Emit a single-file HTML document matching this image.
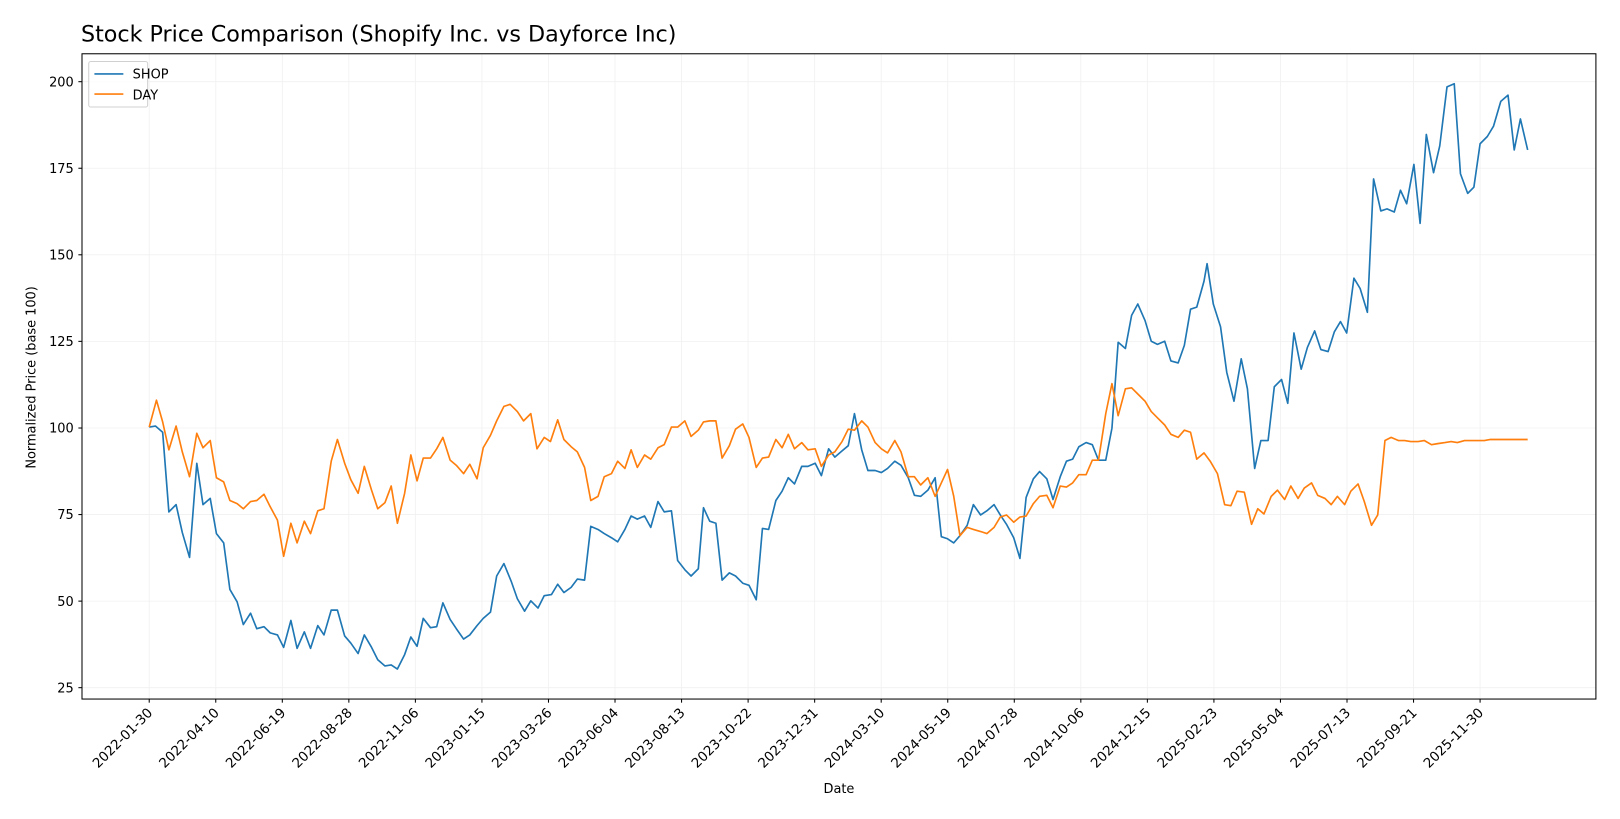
<!DOCTYPE html>
<html><head><meta charset="utf-8"><style>
html,body{margin:0;padding:0;background:#fff;overflow:hidden}
svg{display:block}
text{font-family:"DejaVu Sans","Liberation Sans",sans-serif;fill:#000}
</style></head><body>
<svg width="1620" height="819" viewBox="0 0 1566 792" xmlns="http://www.w3.org/2000/svg">
<rect width="1566" height="792" fill="#fff"/>
<text x="78" y="40" font-size="21.5">Stock Price Comparison (Shopify Inc. vs Dayforce Inc)</text>
<g stroke="#ebebeb" stroke-width="0.8" opacity="0.7">
<line x1="144" y1="52" x2="144" y2="676"/><line x1="208.35" y1="52" x2="208.35" y2="676"/><line x1="272.7" y1="52" x2="272.7" y2="676"/><line x1="337.05" y1="52" x2="337.05" y2="676"/><line x1="401.4" y1="52" x2="401.4" y2="676"/><line x1="465.75" y1="52" x2="465.75" y2="676"/><line x1="530.1" y1="52" x2="530.1" y2="676"/><line x1="594.45" y1="52" x2="594.45" y2="676"/><line x1="658.8" y1="52" x2="658.8" y2="676"/><line x1="723.15" y1="52" x2="723.15" y2="676"/><line x1="787.5" y1="52" x2="787.5" y2="676"/><line x1="851.85" y1="52" x2="851.85" y2="676"/><line x1="916.2" y1="52" x2="916.2" y2="676"/><line x1="980.55" y1="52" x2="980.55" y2="676"/><line x1="1044.9" y1="52" x2="1044.9" y2="676"/><line x1="1109.25" y1="52" x2="1109.25" y2="676"/><line x1="1173.6" y1="52" x2="1173.6" y2="676"/><line x1="1237.95" y1="52" x2="1237.95" y2="676"/><line x1="1302.3" y1="52" x2="1302.3" y2="676"/><line x1="1366.65" y1="52" x2="1366.65" y2="676"/><line x1="1431" y1="52" x2="1431" y2="676"/>
<line x1="79" y1="665" x2="1543" y2="665"/><line x1="79" y1="581.3" x2="1543" y2="581.3"/><line x1="79" y1="497.6" x2="1543" y2="497.6"/><line x1="79" y1="413.9" x2="1543" y2="413.9"/><line x1="79" y1="330.1" x2="1543" y2="330.1"/><line x1="79" y1="246.4" x2="1543" y2="246.4"/><line x1="79" y1="162.7" x2="1543" y2="162.7"/><line x1="79" y1="79" x2="1543" y2="79"/>
</g>
<polyline fill="none" stroke="#1f77b4" stroke-width="1.6" stroke-linejoin="round" points="144,413 150,412 157,418 163,495 170,488 176,515 183,539 190,448 196,488 203,482 209,516 216,525 222,570 229,582 235,604 242,593 248,608 255,606 261,612 268,614 274,626 281,600 287,627 294,611 300,627 307,605 313,614 320,590 326,590 333,615 339,622 346,632 352,614 359,626 365,638 372,644 378,643 384,647 391,633 397,616 403,625 409,598 416,607 422,606 428,583 435,599 441,608 448,618 454,614 461,605 467,598 474,592 480,557 487,545 494,562 500,579 507,591 513,581 520,588 526,576 533,575 539,565 545,573 552,568 558,560 565,561 571,509 578,512 584,516 591,520 597,524 604,512 610,499 616,502 623,499 629,510 636,485 642,495 649,494 655,542 662,551 668,557 675,550 680,491 686,504 692,506 698,561 705,554 711,557 718,564 724,566 731,580 737,511 743,512 750,484 756,475 762,462 768,468 775,451 781,451 788,448 794,460 801,434 807,442 814,436 820,431 826,400 833,435 839,455 846,455 852,457 858,453 865,446 871,450 878,462 884,479 890,480 897,474 904,462 910,519 916,521 922,525 928,518 935,508 941,488 948,498 954,494 961,488 967,498 973,507 980,520 986,540 992,481 999,463 1005,456 1012,463 1018,483 1025,461 1031,446 1037,444 1043,432 1050,428 1056,430 1062,445 1069,445 1075,414 1081,331 1088,337 1094,305 1100,294 1107,310 1113,330 1119,333 1126,330 1132,349 1139,351 1145,334 1151,299 1157,297 1164,272 1167,255 1173,294 1180,316 1186,360 1193,388 1200,347 1206,376 1213,453 1219,426 1226,426 1232,374 1239,367 1245,390 1251,322 1258,357 1264,336 1271,320 1277,338 1284,340 1290,321 1296,311 1302,322 1309,269 1315,279 1322,302 1328,173 1335,204 1341,202 1348,205 1354,184 1360,197 1367,159 1373,216 1379,130 1386,167 1392,141 1399,84 1406,81 1412,168 1419,187 1425,181 1431,139 1438,132 1444,122 1451,98 1458,92 1464,145 1470,115 1477,145"/>
<polyline fill="none" stroke="#ff7f0e" stroke-width="1.6" stroke-linejoin="round" points="144,413 151,387 157,408 163,435 170,412 176,437 183,461 190,419 196,433 203,426 209,462 216,466 222,484 229,487 235,492 242,485 248,484 255,478 261,490 268,503 274,538 281,506 287,525 294,504 300,516 307,494 313,492 320,446 326,425 333,448 339,464 346,477 352,451 359,474 365,492 372,486 378,470 384,506 391,477 397,440 403,465 409,443 416,443 422,434 428,423 435,445 441,450 448,458 454,449 461,463 467,433 474,421 480,407 487,393 493,391 500,398 506,407 513,400 519,434 526,423 532,427 539,406 545,425 552,432 558,437 565,452 571,484 578,480 584,461 591,458 597,446 604,453 610,435 616,452 623,440 629,444 636,433 642,430 649,413 655,413 662,407 668,422 675,416 680,408 686,407 692,407 698,443 705,431 711,415 718,410 724,423 731,452 737,443 743,442 750,425 756,433 762,420 768,434 775,428 781,435 788,434 794,451 801,440 807,437 814,427 820,415 826,416 833,407 839,413 846,428 852,434 858,438 865,426 871,437 878,461 884,461 890,469 897,462 904,480 910,467 916,454 922,480 928,518 935,510 941,512 948,514 954,516 961,510 967,500 973,498 980,505 986,500 992,499 999,487 1005,480 1012,479 1018,491 1025,470 1031,471 1037,467 1043,459 1050,459 1056,445 1062,445 1069,400 1075,371 1081,402 1088,376 1094,375 1100,381 1107,388 1113,398 1119,404 1126,411 1132,420 1139,423 1145,416 1151,418 1157,444 1164,438 1170,446 1177,458 1184,488 1190,489 1196,475 1203,476 1210,507 1216,492 1222,497 1229,480 1235,474 1242,483 1248,470 1255,482 1261,472 1268,467 1274,479 1281,482 1287,488 1293,480 1300,488 1306,475 1313,468 1319,485 1326,508 1332,498 1339,426 1345,423 1352,426 1358,426 1364,427 1371,427 1377,426 1384,430 1390,429 1397,428 1403,427 1409,428 1416,426 1422,426 1428,426 1435,426 1441,425 1448,425 1454,425 1461,425 1467,425 1474,425 1477,425"/>
<rect x="79" y="52" width="1464" height="624" fill="none" stroke="#000" stroke-width="1"/>
<g stroke="#000" stroke-width="1">
<line x1="75.5" y1="665" x2="79" y2="665"/><line x1="75.5" y1="581.3" x2="79" y2="581.3"/><line x1="75.5" y1="497.6" x2="79" y2="497.6"/><line x1="75.5" y1="413.9" x2="79" y2="413.9"/><line x1="75.5" y1="330.1" x2="79" y2="330.1"/><line x1="75.5" y1="246.4" x2="79" y2="246.4"/><line x1="75.5" y1="162.7" x2="79" y2="162.7"/><line x1="75.5" y1="79" x2="79" y2="79"/>
</g>
<g font-size="12.5" text-anchor="end">
<text x="71" y="669.5">25</text><text x="71" y="585.8">50</text><text x="71" y="502.1">75</text><text x="71" y="418.4">100</text><text x="71" y="334.6">125</text><text x="71" y="250.9">150</text><text x="71" y="167.2">175</text><text x="71" y="83.5">200</text>
</g>
<g stroke="#000" stroke-width="1">
<line x1="144" y1="676" x2="144" y2="679.5"/><line x1="208.35" y1="676" x2="208.35" y2="679.5"/><line x1="272.7" y1="676" x2="272.7" y2="679.5"/><line x1="337.05" y1="676" x2="337.05" y2="679.5"/><line x1="401.4" y1="676" x2="401.4" y2="679.5"/><line x1="465.75" y1="676" x2="465.75" y2="679.5"/><line x1="530.1" y1="676" x2="530.1" y2="679.5"/><line x1="594.45" y1="676" x2="594.45" y2="679.5"/><line x1="658.8" y1="676" x2="658.8" y2="679.5"/><line x1="723.15" y1="676" x2="723.15" y2="679.5"/><line x1="787.5" y1="676" x2="787.5" y2="679.5"/><line x1="851.85" y1="676" x2="851.85" y2="679.5"/><line x1="916.2" y1="676" x2="916.2" y2="679.5"/><line x1="980.55" y1="676" x2="980.55" y2="679.5"/><line x1="1044.9" y1="676" x2="1044.9" y2="679.5"/><line x1="1109.25" y1="676" x2="1109.25" y2="679.5"/><line x1="1173.6" y1="676" x2="1173.6" y2="679.5"/><line x1="1237.95" y1="676" x2="1237.95" y2="679.5"/><line x1="1302.3" y1="676" x2="1302.3" y2="679.5"/><line x1="1366.65" y1="676" x2="1366.65" y2="679.5"/><line x1="1431" y1="676" x2="1431" y2="679.5"/>
</g>
<g font-size="13" text-anchor="end">
<text transform="translate(148,690) rotate(-45)">2022-01-30</text>
<text transform="translate(212.35,690) rotate(-45)">2022-04-10</text>
<text transform="translate(276.7,690) rotate(-45)">2022-06-19</text>
<text transform="translate(341.05,690) rotate(-45)">2022-08-28</text>
<text transform="translate(405.4,690) rotate(-45)">2022-11-06</text>
<text transform="translate(469.75,690) rotate(-45)">2023-01-15</text>
<text transform="translate(534.1,690) rotate(-45)">2023-03-26</text>
<text transform="translate(598.45,690) rotate(-45)">2023-06-04</text>
<text transform="translate(662.8,690) rotate(-45)">2023-08-13</text>
<text transform="translate(727.15,690) rotate(-45)">2023-10-22</text>
<text transform="translate(791.5,690) rotate(-45)">2023-12-31</text>
<text transform="translate(855.85,690) rotate(-45)">2024-03-10</text>
<text transform="translate(920.2,690) rotate(-45)">2024-05-19</text>
<text transform="translate(984.55,690) rotate(-45)">2024-07-28</text>
<text transform="translate(1048.9,690) rotate(-45)">2024-10-06</text>
<text transform="translate(1113.25,690) rotate(-45)">2024-12-15</text>
<text transform="translate(1177.6,690) rotate(-45)">2025-02-23</text>
<text transform="translate(1241.95,690) rotate(-45)">2025-05-04</text>
<text transform="translate(1306.3,690) rotate(-45)">2025-07-13</text>
<text transform="translate(1370.65,690) rotate(-45)">2025-09-21</text>
<text transform="translate(1435,690) rotate(-45)">2025-11-30</text>
</g>
<text x="811" y="767" font-size="12.5" text-anchor="middle">Date</text>
<text transform="translate(34,365) rotate(-90)" font-size="12.5" text-anchor="middle">Normalized Price (base 100)</text>
<rect x="85.5" y="59.5" width="57" height="44" rx="2" fill="#fff" fill-opacity="0.8" stroke="#d0d0d0" stroke-width="1"/>
<line x1="91" y1="71.5" x2="119" y2="71.5" stroke="#1f77b4" stroke-width="1.6"/>
<line x1="91" y1="91" x2="119" y2="91" stroke="#ff7f0e" stroke-width="1.6"/>
<text x="128" y="76" font-size="12.5">SHOP</text>
<text x="128" y="96" font-size="12.5">DAY</text>
</svg>
</body></html>
